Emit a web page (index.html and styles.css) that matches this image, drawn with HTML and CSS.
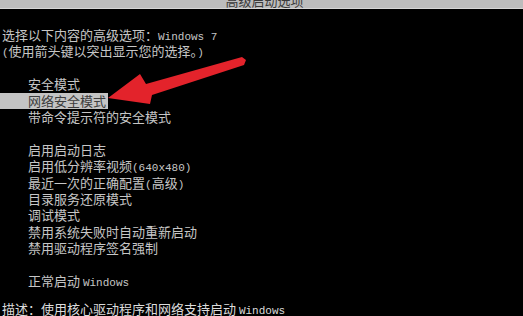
FILE: index.html
```html
<!DOCTYPE html>
<html lang="zh-CN">
<head>
<meta charset="utf-8">
<title>高级启动选项</title>
<link rel="stylesheet" href="styles.css">
</head>
<body>
<div class="titlebar"><div class="title">高级启动选项</div></div>
<div class="screen">
  <div class="intro">
    <div class="line">选择以下内容的高级选项：<span class="lat">Windows 7</span></div>
    <div class="line"><span class="lat">(</span>使用箭头键以突出显示您的选择。<span class="lat">)</span></div>
  </div>
  <div class="menu group">
    <div class="line item">安全模式</div>
    <div class="line item sel">网络安全模式</div>
    <div class="line item">带命令提示符的安全模式</div>
  </div>
  <div class="menu group">
    <div class="line item">启用启动日志</div>
    <div class="line item">启用低分辨率视频<span class="lat">(640x480)</span></div>
    <div class="line item">最近一次的正确配置<span class="lat">(</span>高级<span class="lat">)</span></div>
    <div class="line item">目录服务还原模式</div>
    <div class="line item">调试模式</div>
    <div class="line item">禁用系统失败时自动重新启动</div>
    <div class="line item">禁用驱动程序签名强制</div>
  </div>
  <div class="menu group">
    <div class="line item">正常启动 <span class="lat">Windows</span></div>
  </div>
  <div class="desc line">描述：使用核心驱动程序和网络支持启动 <span class="lat">Windows</span></div>
</div>
<svg class="arrow" width="523" height="316" viewBox="0 0 523 316">
  <polygon points="108,98 140,74 146,84 242,57 246,60 244,65 152,95 150,104" fill="#e3232b"/>
</svg>
</body>
</html>
```
FILE: styles.css
```css
html, body {
  margin: 0;
  padding: 0;
  background: #000;
  width: 523px;
  height: 316px;
  overflow: hidden;
}
body {
  position: relative;
  font-family: "Noto Sans CJK SC", "DejaVu Sans", sans-serif;
  font-size: 13px;
  color: #c6c6c6;
}
.titlebar {
  height: 8px;
  background: #bcbcbc;
  border-bottom: 1px solid #d6d6d6;
  overflow: hidden;
  text-align: center;
}
.title {
  line-height: 14px;
  margin-top: -6px;
  color: #3a3a3a;
  padding-left: 6px;
}
.screen {
  padding-top: 18px;
}
.line {
  line-height: 16.4px;
  height: 16.4px;
  white-space: nowrap;
}
.intro .line {
  padding-left: 2px;
}
.lat {
  font-family: "Liberation Mono", "DejaVu Sans Mono", monospace;
  font-size: 11px;
}
.group {
  margin-top: 16.4px;
}
.item {
  padding-left: 28px;
}
.sel {
  width: 108px;
  box-sizing: border-box;
  background: #c4c4c4;
  color: #3c3c3c;
}
.desc {
  margin-top: 12px;
  padding-left: 2px;
  color: #dcdcdc;
}
.arrow {
  position: absolute;
  left: 0;
  top: 0;
}
```
